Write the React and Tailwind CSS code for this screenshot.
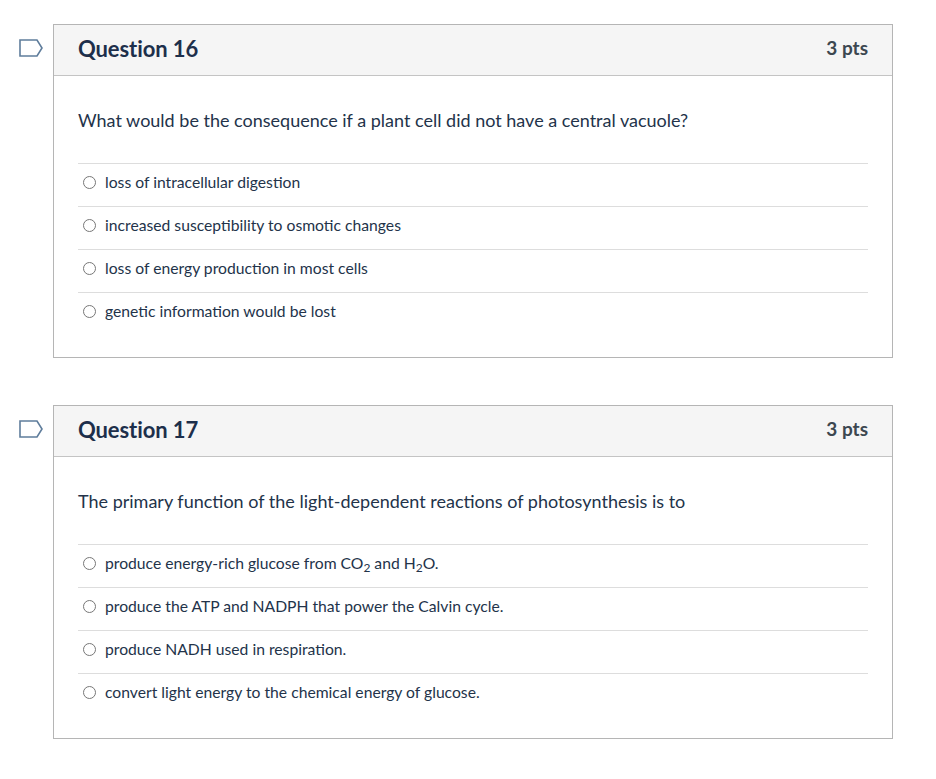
const questions = [
  {
    number: 16,
    points: "3 pts",
    text: "What would be the consequence if a plant cell did not have a central vacuole?",
    answers: [
      "loss of intracellular digestion",
      "increased susceptibility to osmotic changes",
      "loss of energy production in most cells",
      "genetic information would be lost",
    ],
  },
  {
    number: 17,
    points: "3 pts",
    text: "The primary function of the light-dependent reactions of photosynthesis is to",
    answers: [
      <>
        produce energy-rich glucose from CO<sub className="text-[12px]">2</sub> and H<sub className="text-[12px]">2</sub>O.
      </>,
      "produce the ATP and NADPH that power the Calvin cycle.",
      "produce NADH used in respiration.",
      "convert light energy to the chemical energy of glucose.",
    ],
  },
];

const Flag = () => (
  <svg width="28" height="20" viewBox="0 0 28 20" className="shrink-0">
    <path
      d="M4 2 H21 L26 10 L21 18 H4 Z"
      fill="none"
      stroke="#5f7d9c"
      strokeWidth="1.6"
      strokeLinejoin="miter"
    />
  </svg>
);

const Question = ({ q }) => (
  <div className="flex items-start">
    <div className="w-[53px] flex justify-center pt-[14px] pl-[6px]">
      <Flag />
    </div>
    <div className="w-[840px] border border-[#b5b5b5] bg-white">
      <div className="flex items-center justify-between h-[51px] pb-[3px] bg-[#f5f5f5] border-b border-[#c4c4c4] px-6">
        <h2 className="text-[22px] font-bold text-[#1d2f4b] tracking-[-0.1px]">
          Question {q.number}
        </h2>
        <span className="text-[19px] font-bold text-[#3c4750]">{q.points}</span>
      </div>
      <div className="px-6 pt-[31px] pb-[22px]">
        <p className="text-[18px] leading-[26px] text-[#23334a]">{q.text}</p>
        <div className="mt-[30px]">
          {q.answers.map((a, i) => (
            <div
              key={i}
              className="flex items-center h-[43px] pb-[6px] border-t border-[#dddddd] pl-[5px]"
            >
              <span className="w-[13px] h-[13px] rounded-full border border-[#777] bg-white shrink-0" />
              <span className="ml-[9px] text-[15.7px] leading-[22px] text-[#23334a]">{a}</span>
            </div>
          ))}
        </div>
      </div>
    </div>
  </div>
);

const App = () => {
  return (
    <div
      className="w-[936px] h-[779px] bg-white pt-[24px] flex flex-col gap-[47px]"
      style={{ fontFamily: "Lato, 'Liberation Sans', sans-serif" }}
    >
      {questions.map((q) => (
        <Question key={q.number} q={q} />
      ))}
    </div>
  );
};

export default App;
